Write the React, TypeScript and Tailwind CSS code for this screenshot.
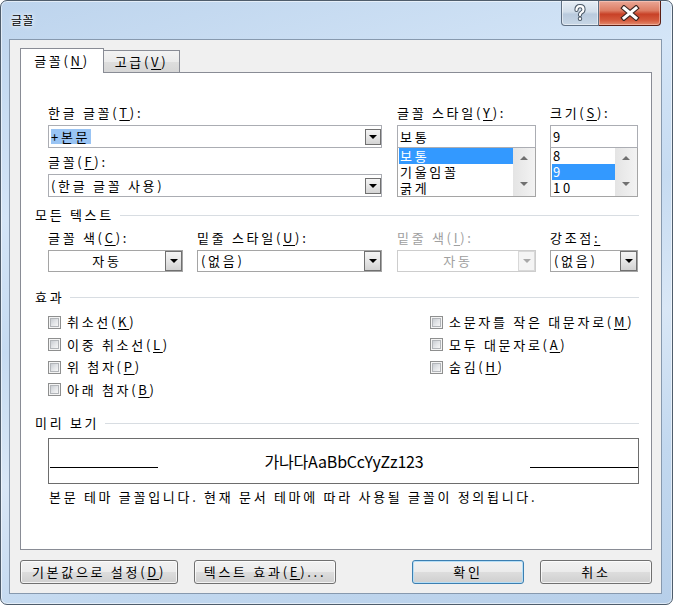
import React from "react";

const ff = "font-['Noto_Sans_CJK_KR','Noto_Sans_CJK_SC',sans-serif]";

function U({ c }: { c: string }) {
  return <span className="underline decoration-1 underline-offset-[2px]">{c}</span>;
}

function Label({ children, disabled }: { children: React.ReactNode; disabled?: boolean }) {
  return (
    <div className={`h-4 leading-4 whitespace-nowrap ${disabled ? "text-[#a0a0a0]" : "text-black"}`}>{children}</div>
  );
}

function Tri({ gray }: { gray?: boolean }) {
  return (
    <div
      className={`w-0 h-0 border-x-[4px] border-x-transparent border-t-[4px] ${gray ? "border-t-[#a8a8a8]" : "border-t-black"}`}
    />
  );
}

function EditCombo({ text, highlight }: { text: string; highlight?: boolean }) {
  return (
    <div className="h-[23px] border border-[#abadb3] bg-white flex items-center">
      <div className="flex-1 pl-[2px] leading-4 whitespace-nowrap">
        {highlight ? <span className="bg-[#99c4f4] text-black inline-block h-[15px] leading-[15px] pr-[1px]">{text}</span> : text}
      </div>
      <div className="w-[16px] h-[16px] border border-[#707070] bg-[linear-gradient(#f4f4f4_0%,#e6e6e6_50%,#d4d4d4_100%)] flex items-center justify-center">
        <Tri />
      </div>
    </div>
  );
}

function ListCombo({ text, center, disabled }: { text: string; center?: boolean; disabled?: boolean }) {
  return (
    <div
      className={`h-[22px] border ${disabled ? "border-[#cdcdcd]" : "border-[#a5a5a5]"} bg-white flex items-stretch`}
    >
      <div
        className={`flex-1 flex items-center leading-4 whitespace-nowrap ${center ? "justify-center" : "pl-[3px]"} ${disabled ? "text-[#a0a0a0]" : "text-black"}`}
      >
        {text}
      </div>
      <div
        className={`w-[17px] border ${disabled ? "border-[#d8d8d8] bg-[#f4f4f4]" : "border-[#707070] bg-[linear-gradient(#f4f4f4_0%,#e6e6e6_50%,#d2d2d2_100%)]"} flex items-center justify-center`}
      >
        <Tri gray={disabled} />
      </div>
    </div>
  );
}

function TextBox({ text }: { text: string }) {
  return (
    <div className="h-[23px] border border-[#abadb3] bg-white flex items-center pl-[2px] leading-4">
      {text}
    </div>
  );
}

function ScrollArrow({ up }: { up?: boolean }) {
  return (
    <div
      className={`w-0 h-0 border-x-[4px] border-x-transparent ${up ? "border-b-[4px] border-b-[#707070]" : "border-t-[4px] border-t-[#707070]"}`}
    />
  );
}

function ListBox({ items, selected }: { items: string[]; selected: number }) {
  return (
    <div className="h-[49px] border border-[#a5a5a5] border-t-0 bg-white flex overflow-hidden">
      <div className="flex-1 flex flex-col">
        {items.map((it, i) => (
          <div
            key={i}
            className={`h-4 leading-4 shrink-0 ml-px pl-[1px] ${i === selected ? "bg-[#3399ff] text-white" : "text-black"}`}
          >
            {it}
          </div>
        ))}
      </div>
      <div className="w-[22px] bg-[linear-gradient(to_right,#e4e4e4,#f3f3f3)] flex flex-col items-center justify-between pt-[8px] pb-[10px]">
        <ScrollArrow up />
        <ScrollArrow />
      </div>
    </div>
  );
}

function Section({ title }: { title: string }) {
  return (
    <div className="h-4 flex items-center gap-[6px]">
      <div className="leading-4 whitespace-nowrap">{title}</div>
      <div className="flex-1 h-px bg-[#d8dde2]" />
    </div>
  );
}

function Check({ children }: { children: React.ReactNode }) {
  return (
    <div className="h-[22.5px] flex items-center gap-[6px]">
      <div className="w-[13px] h-[13px] border border-[#8e8f8f] bg-[#f4f4f4] flex items-center justify-center">
        <div className="w-[9px] h-[9px] border border-[#b2b5b9] bg-[linear-gradient(135deg,#c9cdd2_0%,#e2e4e7_50%,#f6f6f6_100%)]" />
      </div>
      <div className="leading-4 whitespace-nowrap">{children}</div>
    </div>
  );
}

function Btn({ w, children, def }: { w: string; children: React.ReactNode; def?: boolean }) {
  return (
    <div
      className={`h-[24px] ${w} rounded-[3px] border ${def ? "border-[#3c7fb1] shadow-[inset_0_0_0_1px_#b6def6]" : "border-[#707070] shadow-[inset_0_0_0_1px_rgba(255,255,255,0.75)]"} bg-[linear-gradient(#f2f2f2_0%,#ebebeb_50%,#dddddd_51%,#cfcfcf_100%)] flex items-center justify-center leading-4 whitespace-nowrap`}
    >
      {children}
    </div>
  );
}

export default function App() {
  return (
    <div className={`w-[673px] h-[605px] bg-white ${ff} text-[13px] tracking-[2.7px] text-black`}>
      <div className="w-[673px] h-[605px] rounded-[7px] border border-[#4f5d6c] bg-[linear-gradient(165deg,#bdd4ed_0%,#d4e5f7_28%,#c6dbf1_45%,#d9e7f6_62%,#c2d8ef_80%,#b7cfe9_100%)] shadow-[inset_0_0_0_1px_rgba(255,255,255,0.55)] flex flex-col pl-[8px] pr-[10px] pb-[10px]">
        {/* Title bar */}
        <div className="h-[38px] flex items-start">
          <div className="pl-[2px] pt-[11px] text-[12px] tracking-[0.5px] leading-4 [text-shadow:0_0_6px_#fff,0_0_3px_#fff]">
            글꼴
          </div>
          <div className="flex-1" />
          <div className="flex mr-[1px]">
            <div className="w-[38px] h-[25px] border border-[#5f6f82] border-t-0 rounded-bl-[4px] bg-[linear-gradient(#e6edf5_0%,#d2deea_45%,#b9cadd_55%,#c8d7e6_100%)] shadow-[inset_0_0_0_1px_rgba(255,255,255,0.5)] flex items-center justify-center">
              <svg width="14" height="18" viewBox="0 0 14 18">
                <path d="M3.5 6 Q3.5 2.2 7 2.2 Q10.5 2.2 10.5 5.5 Q10.5 7.6 8.3 8.6 Q7 9.3 7 11" fill="none" stroke="#4b5967" strokeWidth="4.2" strokeLinecap="round" />
                <circle cx="7" cy="14.8" r="2.2" fill="#4b5967" />
                <path d="M3.5 6 Q3.5 2.2 7 2.2 Q10.5 2.2 10.5 5.5 Q10.5 7.6 8.3 8.6 Q7 9.3 7 11" fill="none" stroke="#ffffff" strokeWidth="2.2" strokeLinecap="round" />
                <circle cx="7" cy="14.8" r="1.2" fill="#ffffff" />
              </svg>
            </div>
            <div className="w-[62px] h-[25px] border border-[#5a1e14] border-t-0 border-l-0 rounded-br-[4px] bg-[linear-gradient(#e9a796_0%,#dc7d64_40%,#c84127_55%,#d45a3d_80%,#e38b6e_100%)] shadow-[inset_0_0_0_1px_rgba(255,220,210,0.45)] flex items-center justify-center">
              <svg width="22" height="16" viewBox="0 0 22 16">
                <path d="M5 3 L17 13 M17 3 L5 13" stroke="#3a2420" strokeWidth="5.2" strokeLinecap="square" />
                <path d="M5 3 L17 13 M17 3 L5 13" stroke="#ffffff" strokeWidth="3" strokeLinecap="square" />
              </svg>
            </div>
          </div>
        </div>

        {/* Client area */}
        <div className="flex-1 border border-[#8799ae] bg-[#f0f0f0] flex flex-col pl-[10px] pr-[9px] pt-[8px]">
          {/* Tabs */}
          <div className="h-[24px] flex items-end">
            <div className="relative z-10 -mb-px h-[25px] w-[84px] border border-b-0 border-[#898c95] bg-white flex items-center justify-center leading-4">
              글꼴(<U c="N" />)
            </div>
            <div className="h-[22px] w-[76px] border border-l-0 border-b-0 border-[#898c95] bg-[linear-gradient(#f3f3f3_0%,#ebebeb_50%,#dedede_51%,#d6d6d6_100%)] flex items-center justify-center leading-4">
              고급(<U c="V" />)
            </div>
          </div>

          {/* Panel */}
          <div className="h-[478px] border border-[#898c95] bg-white flex flex-col pl-[14px] pr-[12px] pt-[32px]">
            {/* Font row */}
            <div className="flex ml-[13px]">
              <div className="w-[334px] flex flex-col">
                <Label>
                  한글 글꼴(<U c="T" />):
                </Label>
                <div className="mt-[4px]">
                  <EditCombo text="+본문" highlight />
                </div>
                <div className="mt-[6px]">
                  <Label>
                    글꼴(<U c="F" />):
                  </Label>
                </div>
                <div className="mt-[4px]">
                  <EditCombo text="(한글 글꼴 사용)" />
                </div>
              </div>
              <div className="w-[139px] ml-[15px] flex flex-col">
                <Label>
                  글꼴 스타일(<U c="Y" />):
                </Label>
                <div className="mt-[4px]">
                  <TextBox text="보통" />
                </div>
                <ListBox items={["보통", "기울임꼴", "굵게"]} selected={0} />
              </div>
              <div className="w-[88px] ml-[14px] flex flex-col">
                <Label>
                  크기(<U c="S" />):
                </Label>
                <div className="mt-[4px]">
                  <TextBox text="9" />
                </div>
                <ListBox items={["8", "9", "10"]} selected={1} />
              </div>
            </div>

            {/* All text */}
            <div className="mt-[10px]">
              <Section title="모든 텍스트" />
            </div>
            <div className="flex ml-[13px] mt-[7px]">
              <div className="w-[135px] flex flex-col">
                <Label>
                  글꼴 색(<U c="C" />):
                </Label>
                <div className="mt-[4px]">
                  <ListCombo text="자동" center />
                </div>
              </div>
              <div className="w-[185px] ml-[14px] flex flex-col">
                <Label>
                  밑줄 스타일(<U c="U" />):
                </Label>
                <div className="mt-[4px]">
                  <ListCombo text="(없음)" />
                </div>
              </div>
              <div className="w-[139px] ml-[15px] flex flex-col">
                <Label disabled>
                  밑줄 색(<U c="I" />):
                </Label>
                <div className="mt-[4px]">
                  <ListCombo text="자동" center disabled />
                </div>
              </div>
              <div className="w-[88px] ml-[14px] flex flex-col">
                <Label>
                  강조점<U c=":" />
                </Label>
                <div className="mt-[4px]">
                  <ListCombo text="(없음)" />
                </div>
              </div>
            </div>

            {/* Effects */}
            <div className="mt-[17px]">
              <Section title="효과" />
            </div>
            <div className="grid grid-cols-[382px_1fr] ml-[13px] mt-[6px]">
              <div className="flex flex-col">
                <Check>
                  취소선(<U c="K" />)
                </Check>
                <Check>
                  이중 취소선(<U c="L" />)
                </Check>
                <Check>
                  위 첨자(<U c="P" />)
                </Check>
                <Check>
                  아래 첨자(<U c="B" />)
                </Check>
              </div>
              <div className="flex flex-col">
                <Check>
                  소문자를 작은 대문자로(<U c="M" />)
                </Check>
                <Check>
                  모두 대문자로(<U c="A" />)
                </Check>
                <Check>
                  숨김(<U c="H" />)
                </Check>
              </div>
            </div>

            {/* Preview */}
            <div className="mt-[14px]">
              <Section title="미리 보기" />
            </div>
            <div className="ml-[13px] mt-[7px] h-[46px] border border-[#6d6d6d] bg-white flex items-center">
              <div className="w-[108px] h-px mt-[12px] ml-px bg-black" />
              <div className="flex-1 text-center text-[16px] tracking-[-0.2px] leading-5 whitespace-nowrap">
                가나다AaBbCcYyZz123
              </div>
              <div className="w-[108px] h-px mt-[12px] bg-black" />
            </div>
            <div className="ml-[14px] mt-[5px] leading-4 whitespace-nowrap">
              본문 테마 글꼴입니다. 현재 문서 테마에 따라 사용될 글꼴이 정의됩니다.
            </div>
          </div>

          {/* Buttons */}
          <div className="mt-[10px] flex justify-between">
            <div className="flex gap-[16px]">
              <Btn w="w-[158px]">
                기본값으로 설정(<U c="D" />)
              </Btn>
              <Btn w="w-[142px]">
                텍스트 효과(<U c="E" />)...
              </Btn>
            </div>
            <div className="flex gap-[16px]">
              <Btn w="w-[112px]" def>
                확인
              </Btn>
              <Btn w="w-[112px]">취소</Btn>
            </div>
          </div>
        </div>
      </div>
    </div>
  );
}
